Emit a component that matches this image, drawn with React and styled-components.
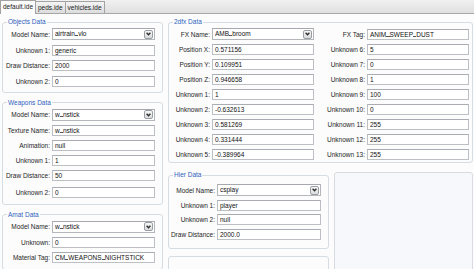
import React from 'react';
import styled, { createGlobalStyle } from 'styled-components';

const GlobalStyle = createGlobalStyle`
  html, body {
    margin: 0;
    padding: 0;
    background: #fcfcfc;
  }
  body {
    font-family: "Liberation Sans", Arial, sans-serif;
  }
`;

const Window = styled.div`
  display: flex;
  flex-direction: column;
  width: 474px;
  height: 269px;
  overflow: hidden;
  background: #fcfcfc;
  font-size: 6.5px;
  color: #222;
`;

const TabStrip = styled.div`
  display: flex;
  align-items: flex-end;
  flex: none;
  height: 14px;
  box-sizing: border-box;
  background: linear-gradient(#f1f1f1, #dfdfdf);
  border-bottom: 1px solid #a7a7a7;
`;

const Tab = styled.div`
  position: relative;
  z-index: ${p => (p.$active ? 1 : 0)};
  box-sizing: border-box;
  height: ${p => (p.$active ? '14px' : '12px')};
  margin-bottom: ${p => (p.$active ? '-1px' : '0')};
  margin-right: -1px;
  padding: 0 2px;
  border: 1px solid #a2a2a2;
  border-bottom: none;
  border-radius: 1px 1px 0 0;
  background: ${p => (p.$active ? '#fcfcfc' : 'linear-gradient(#f4f4f4, #dcdcdc)')};
  line-height: ${p => (p.$active ? '12px' : '11px')};
  white-space: nowrap;
  color: #1a1a1a;
`;

const Content = styled.div`
  display: flex;
  align-items: flex-start;
  gap: 5px;
  padding: 4px 1px 0 2px;
`;

const Column = styled.div`
  display: flex;
  flex-direction: column;
  gap: ${p => p.$gap ?? 6}px;
  width: ${p => p.$width}px;
  flex: none;
`;

const Group = styled.fieldset`
  display: flex;
  flex-direction: column;
  flex-shrink: 0;
  gap: ${p => p.$gap ?? 4}px;
  margin: 0;
  min-width: 0;
  min-height: ${p => p.$minHeight ?? 0}px;
  padding: ${p => p.$padTop ?? 2}px ${p => p.$padRight ?? 7}px ${p => p.$padBottom ?? 6}px 1px;
  border: 1px solid #d5dde3;
  border-radius: 3px;
`;

const Title = styled.legend`
  margin-left: 3px;
  padding: 0 1px;
  line-height: 8px;
  color: #2f63bd;
`;

const Row = styled.div`
  display: grid;
  grid-template-columns: ${p => p.$cols};
  column-gap: 2px;
  align-items: center;
  margin-top: ${p => p.$extra ?? 0}px;
`;

const Label = styled.span`
  text-align: right;
  white-space: nowrap;
  color: #1e1e1e;
`;

const Field = styled.div`
  box-sizing: border-box;
  height: 11px;
  padding: 0 2px;
  border: 1px solid #bcbfc4;
  border-top-color: #a9acb2;
  background: #fff;
  line-height: 9px;
  white-space: nowrap;
  overflow: hidden;
  color: #111;
`;

const Combo = styled.div`
  display: flex;
  align-items: center;
  box-sizing: border-box;
  height: 12px;
  padding: 0 1px 0 2px;
  border: 1px solid #b3b6bb;
  border-top-color: #a5a8ae;
  background: #fff;
  color: #111;
`;

const ComboText = styled.span`
  flex: 1;
  line-height: 10px;
  white-space: nowrap;
  overflow: hidden;
`;

const Under = styled.span`
  display: inline-block;
  width: 0.5em;
  height: 6px;
  border-bottom: 1px solid #555;
  color: transparent;
  vertical-align: baseline;
`;

const DropButton = styled.span`
  display: flex;
  align-items: center;
  justify-content: center;
  box-sizing: border-box;
  width: 9px;
  height: 9px;
  border: 1px solid #9a9ea4;
  border-radius: 2px;
  background: linear-gradient(#f7f7f7, #d9dadc);
`;

const RightArea = styled.div`
  display: flex;
  flex-direction: column;
  gap: 8px;
  width: 305px;
  flex: none;
`;

const BottomRow = styled.div`
  display: flex;
  align-items: flex-start;
  gap: 5px;
`;

const EmptyPanel = styled.div`
  flex: 1;
  height: 120px;
  margin-top: 1px;
  border: 1px solid #d8dce2;
  border-radius: 3px;
  background: #f7f8fb;
`;

const Chevron = () => (
  <svg width="5" height="4" viewBox="0 0 5 4">
    <polyline points="0.6,0.8 2.5,2.8 4.4,0.8" fill="none" stroke="#2b2b2b" strokeWidth="1.3" />
  </svg>
);

// underscores are hairlines at this size, so draw them as a 1px rule
const Text = ({ children }) =>
  String(children).split('_').map((part, i) => (
    <React.Fragment key={i}>
      {i > 0 && <Under>_</Under>}
      {part}
    </React.Fragment>
  ));

const Dropdown = ({ value }) => (
  <Combo>
    <ComboText><Text>{value}</Text></ComboText>
    <DropButton><Chevron /></DropButton>
  </Combo>
);

const Input = ({ label, value, cols, extra }) => (
  <Row $cols={cols} $extra={extra}>
    <Label>{label}</Label>
    <Field><Text>{value}</Text></Field>
  </Row>
);

const Select = ({ label, value, cols }) => (
  <Row $cols={cols}>
    <Label>{label}</Label>
    <Dropdown value={value} />
  </Row>
);

const LEFT = '46px 1fr';
const HIER = '45px 1fr';
const FX = '40px 102px 49px 102px';

const PairRow = ({ a, b }) => (
  <Row $cols={FX}>
    <Label>{a[0]}</Label>
    {a[2] ? <Dropdown value={a[1]} /> : <Field><Text>{a[1]}</Text></Field>}
    <Label>{b[0]}</Label>
    <Field><Text>{b[1]}</Text></Field>
  </Row>
);

const fxRows = [
  [['FX Name:', 'AMB_broom', true], ['FX Tag:', 'ANIM_SWEEP_DUST']],
  [['Position X:', '0.571156'], ['Unknown 6:', '5']],
  [['Position Y:', '0.109951'], ['Unknown 7:', '0']],
  [['Position Z:', '0.946658'], ['Unknown 8:', '1']],
  [['Unknown 1:', '1'], ['Unknown 9:', '100']],
  [['Unknown 2:', '-0.632613'], ['Unknown 10:', '0']],
  [['Unknown 3:', '0.581269'], ['Unknown 11:', '255']],
  [['Unknown 4:', '0.331444'], ['Unknown 12:', '255']],
  [['Unknown 5:', '-0.389964'], ['Unknown 13:', '255']],
];

export default function App() {
  return (
    <Window>
      <GlobalStyle />
      <TabStrip>
        <Tab $active>default.ide</Tab>
        <Tab>peds.ide</Tab>
        <Tab>vehicles.ide</Tab>
      </TabStrip>
      <Content>
        <Column $width={161}>
          <Group $gap={4.5} $padBottom={5}>
            <Title>Objects Data</Title>
            <Select label="Model Name:" value="airtrain_vlo" cols={LEFT} />
            <Input label="Unknown 1:" value="generic" cols={LEFT} />
            <Input label="Draw Distance:" value="2000" cols={LEFT} />
            <Input label="Unknown 2:" value="0" cols={LEFT} />
          </Group>
          <Group>
            <Title>Weapons Data</Title>
            <Select label="Model Name:" value="w_nstick" cols={LEFT} />
            <Input label="Texture Name:" value="w_nstick" cols={LEFT} />
            <Input label="Animation:" value="null" cols={LEFT} />
            <Input label="Unknown 1:" value="1" cols={LEFT} />
            <Input label="Draw Distance:" value="50" cols={LEFT} />
            <Input label="Unknown 2:" value="0" cols={LEFT} extra={2} />
          </Group>
          <Group>
            <Title>Amat Data</Title>
            <Select label="Model Name:" value="w_nstick" cols={LEFT} />
            <Input label="Unknown:" value="0" cols={LEFT} />
            <Input label="Material Tag:" value="CM_WEAPONS_NIGHTSTICK" cols={LEFT} />
          </Group>
        </Column>
        <RightArea>
          <Group $padRight={2} $padBottom={2}>
            <Title>2dfx Data</Title>
            {fxRows.map(([a, b]) => (
              <PairRow key={a[0]} a={a} b={b} />
            ))}
          </Group>
          <BottomRow>
            <Column $width={161} $gap={7}>
              <Group $gap={3.5} $padTop={5} $padBottom={8}>
                <Title>Hier Data</Title>
                <Select label="Model Name:" value="csplay" cols={HIER} />
                <Input label="Unknown 1:" value="player" cols={HIER} />
                <Input label="Unknown 2:" value="null" cols={HIER} />
                <Input label="Draw Distance:" value="2000.0" cols={HIER} />
              </Group>
              <Group $minHeight={60} />
            </Column>
            <EmptyPanel />
          </BottomRow>
        </RightArea>
      </Content>
    </Window>
  );
}
